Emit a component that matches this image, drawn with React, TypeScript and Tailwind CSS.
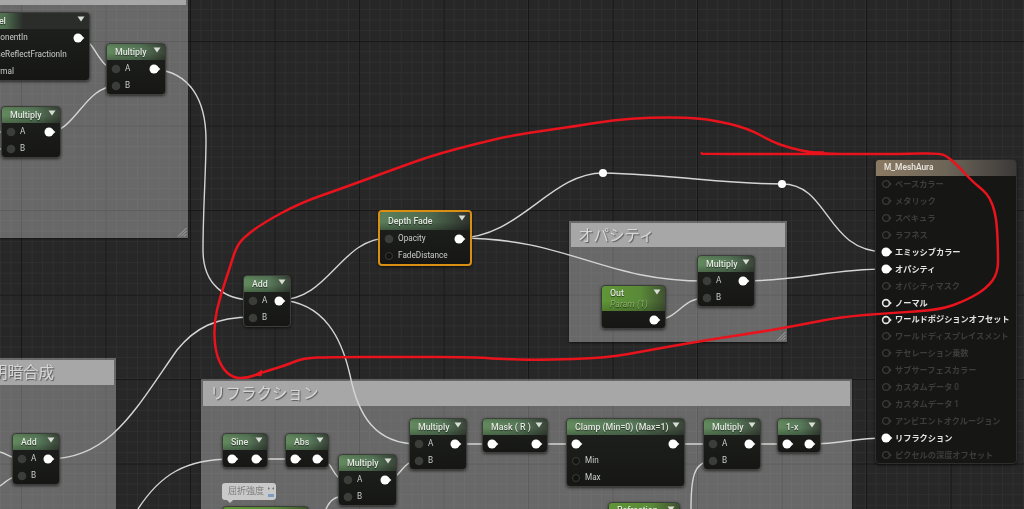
import React from "react";

type PinKind = "in" | "empty" | "out" | "ring" | "dim";
type Row = { l?: PinKind; t?: string; r?: PinKind };

const AB: Row[] = [
  { l: "in", t: "A", r: "out" },
  { l: "in", t: "B" },
];
const THROUGH: Row[] = [{ l: "out", r: "out" }];

const GREEN = "bg-[linear-gradient(180deg,rgba(0,0,0,0.12),transparent_25%,transparent_55%,rgba(0,0,0,0.25)),linear-gradient(90deg,#62895d,#58795a_55%,#3a4538)]";
const PARAM = "bg-[linear-gradient(180deg,transparent_60%,rgba(0,0,0,0.18)),linear-gradient(90deg,#5f9636,#5a8a38_60%,#3f5230)]";

const FONT = "font-['Roboto','Noto_Sans_CJK_JP',sans-serif]";

// Little socket shapes, all 12 wide so the labels line up
const Pin = ({ kind }: { kind?: PinKind }) => {
  if (!kind) return <span className="w-[12px]" />;
  return (
    <svg viewBox="0 0 12 10" className="w-[12px] h-[10px] shrink-0">
      {kind === "out" && (
        <>
          <path d="M8 2 L11.4 5 L8 8 Z" fill="#f4f4f4" />
          <circle cx="5" cy="5" r="4.5" fill="#ffffff" />
        </>
      )}
      {kind === "in" && <circle cx="5" cy="5" r="4.3" fill="#3b3d39" />}
      {kind === "empty" && <circle cx="5" cy="5" r="3.5" fill="#131412" stroke="#393b37" strokeWidth="1" />}
      {kind === "ring" && (
        <>
          <path d="M8 2.4 L10.8 5 L8 7.6 Z" fill="#e6e6e6" />
          <circle cx="5" cy="5" r="3.4" fill="#1a1b19" stroke="#e6e6e6" strokeWidth="1.6" />
        </>
      )}
      {kind === "dim" && (
        <>
          <path d="M8 2.4 L10.8 5 L8 7.6 Z" fill="#3a3b39" />
          <circle cx="5" cy="5" r="3.4" fill="#161715" stroke="#3a3b39" strokeWidth="1.3" />
        </>
      )}
    </svg>
  );
};

const Arrow = () => (
  <svg viewBox="0 0 8 6" className="absolute right-[4px] top-[3px] w-[8px] h-[6px]">
    <path d="M0.5 0.5 H7.5 L4 5.5 Z" fill="#d9ddd6" />
  </svg>
);

const Node = ({
  pos,
  title,
  rows,
  sub,
  head = GREEN,
  headH = "h-[16px] pt-[2px]",
  frame = "border border-[#3c3e3a]",
}: {
  pos: string;
  title: string;
  rows: Row[];
  sub?: string;
  head?: string;
  headH?: string;
  frame?: string;
}) => (
  <div
    className={`absolute ${pos} ${frame} rounded-[4px] overflow-hidden bg-[linear-gradient(180deg,#1f211e,#161715)] shadow-[0_1px_3px_rgba(0,0,0,0.6)] ${FONT}`}
  >
    <div className={`relative ${headH} ${head} pl-[8px] text-[8.8px] leading-[12px] font-medium text-[#e3e8e0] whitespace-nowrap [text-shadow:0_1px_1px_rgba(0,0,0,0.6)]`}>
      {title}
      {sub && <div className="italic font-normal text-[#8fb26c] text-[8.8px] leading-[11px]">{sub}</div>}
      <Arrow />
    </div>
    {rows.map((row, i) => (
      <div key={i} className="flex items-center h-[17px] pl-[4px] pr-[4px] text-[8.2px] text-[#c9ccc7] whitespace-nowrap">
        <Pin kind={row.l} />
        <span className="ml-[2px] flex-1">{row.t}</span>
        <Pin kind={row.r} />
      </div>
    ))}
  </div>
);

const Grip = () => (
  <svg viewBox="0 0 10 10" className="absolute right-[1px] bottom-[1px] w-[10px] h-[10px]">
    <path d="M9.5 1 L1 9.5 M9.5 4 L4 9.5 M9.5 7 L7 9.5" stroke="#a8a8a8" strokeWidth="1" />
  </svg>
);

const Comment = ({ pos, title, band }: { pos: string; title?: string; band: string }) => (
  <div className={`absolute ${pos} bg-white/30 p-[2px] shadow-[0_1px_2px_rgba(0,0,0,0.5)] ${FONT}`}>
    <div className={`${band} bg-[#a7a7a7] flex items-center pt-[3px] text-[15.5px] text-[#d6d6d6] [text-shadow:1px_1px_1px_#5a5a5a] whitespace-nowrap`}>
      {title}
    </div>
    <Grip />
  </div>
);

const materialPins: { t: string; on?: PinKind }[] = [
  { t: "ベースカラー" },
  { t: "メタリック" },
  { t: "スペキュラ" },
  { t: "ラフネス" },
  { t: "エミッシブカラー", on: "out" },
  { t: "オパシティ", on: "out" },
  { t: "オパシティマスク" },
  { t: "ノーマル", on: "ring" },
  { t: "ワールドポジションオフセット", on: "ring" },
  { t: "ワールドディスプレイスメント" },
  { t: "テセレーション乗数" },
  { t: "サブサーフェスカラー" },
  { t: "カスタムデータ 0" },
  { t: "カスタムデータ 1" },
  { t: "アンビエントオクルージョン" },
  { t: "リフラクション", on: "out" },
  { t: "ピクセルの深度オフセット" },
];

const wires = [
  "M79 38 C95 38 98 69 116 69",
  "M49 132 C75 132 85 86 116 86",
  "M154 69 C190 72 206 100 206 140 C206 170 203 210 203 250 C203 285 225 300 253 300",
  "M279 300 C330 300 340 238 389 238",
  "M48 459 C110 459 135 410 177 350 C195 328 215 317 253 317",
  "M279 300 C325 302 342 340 350 375 C358 415 375 444 418 444",
  "M458 238 C520 238 550 173 603 173",
  "M603 173 C680 175 720 184 782 184",
  "M782 184 C830 184 825 252 886 252",
  "M458 238 C570 238 600 281 706 281",
  "M744 281 C800 281 830 269 886 269",
  "M654 320 C680 320 680 298 706 298",
  "M0 452 C8 454 12 459 21 459",
  "M0 486 C8 480 12 476 21 476",
  "M0 132 H11",
  "M0 149 H11",
  "M138 509 C160 475 185 459 232 459",
  "M255 459 H295",
  "M318 459 C335 459 330 480 347 480",
  "M326 509 C330 500 335 496 347 496",
  "M385 480 C402 480 400 461 418 461",
  "M456 444 H492",
  "M537 444 H575",
  "M673 444 H712",
  "M750 444 H786",
  "M810 444 C845 444 850 438 886 438",
  "M691 509 C691 480 693 461 712 461",
];

// hand drawn red pen line, traced point by point
const penPoints = [
  [703, 154], [701, 153], [703, 154], [760, 154], [840, 154], [900, 154], [940, 153], [948, 157], [957, 165],
  [973, 182], [983, 190], [990, 198], [995, 212], [997, 227], [998, 250], [998, 273], [987, 288], [967, 300],
  [940, 310], [890, 313], [840, 317], [800, 325], [760, 332], [707, 340], [650, 350], [607, 358], [540, 360],
  [500, 359], [473, 357], [400, 357], [333, 357], [303, 358], [287, 365], [260, 373], [248, 378], [233, 378],
  [222, 368], [215, 350], [214, 323], [220, 297], [230, 267], [236, 248], [243, 238], [263, 223], [300, 203],
  [343, 188], [400, 167], [440, 153], [500, 138], [527, 133], [577, 126], [613, 120], [650, 117.5], [687, 117.5],
  [713, 120], [747, 128], [773, 142], [790, 148], [813, 153], [840, 154],
];

const smooth = (pts: number[][]) => {
  let d = `M${pts[0][0]} ${pts[0][1]}`;
  for (let i = 1; i < pts.length - 1; i++) {
    const mx = (pts[i][0] + pts[i + 1][0]) / 2;
    const my = (pts[i][1] + pts[i + 1][1]) / 2;
    d += ` Q${pts[i][0]} ${pts[i][1]} ${mx} ${my}`;
  }
  const last = pts[pts.length - 1];
  return `${d} L${last[0]} ${last[1]}`;
};

export default function App() {
  return (
    <div className="relative w-[1024px] h-[509px] overflow-hidden blur-[0.35px] bg-[#272727] bg-[image:linear-gradient(#171717_1px,transparent_1px),linear-gradient(90deg,#171717_1px,transparent_1px),linear-gradient(#2f2f2f_1px,transparent_1px),linear-gradient(90deg,#2f2f2f_1px,transparent_1px)] bg-[size:84.5px_84.5px,84.5px_84.5px,10.56px_10.56px,10.56px_10.56px] bg-[position:0_41px,21px_0,0_9px,0_0]">
      {/* comment boxes sit under everything */}
      <Comment pos="left-[-100px] top-[-21px] w-[288px] h-[259px]" band="h-[24px]" />
      <Comment pos="left-[569px] top-[221px] w-[218px] h-[121px]" title="オパシティ" band="h-[24px] pl-[7px]" />
      <Comment pos="left-[-100px] top-[358px] w-[216px] h-[200px]" title="明暗合成" band="h-[25px] pl-[90px]" />
      <Comment pos="left-[201px] top-[379px] w-[651px] h-[180px]" title="リフラクション" band="h-[25px] pl-[7px]" />

      {/* wires */}
      <svg viewBox="0 0 1024 509" className="absolute left-0 top-0 w-[1024px] h-[509px]" fill="none">
        {wires.map((d) => (
          <path key={d} d={d} stroke="#d4d4d4" strokeWidth="1.4" />
        ))}
        <circle cx="603" cy="173" r="4" fill="#ffffff" />
        <circle cx="782" cy="184" r="4" fill="#ffffff" />
      </svg>

      {/* nodes */}
      <Node
        pos="left-[-32px] top-[12px] w-[122px]"
        title="Fresnel"
        rows={[{ l: "empty", t: "ExponentIn", r: "out" }, { l: "empty", t: "BaseReflectFractionIn" }, { l: "empty", t: "Normal" }]}
        head="bg-[linear-gradient(90deg,#62895d,#4f6e50_30%,#2b2d2a_45%,#2b2d2a)]"
      />
      <Node pos="left-[106px] top-[43px] w-[60px]" title="Multiply" rows={AB} />
      <Node pos="left-[1px] top-[106px] w-[60px]" title="Multiply" rows={AB} />
      <Node pos="left-[243px] top-[275px] w-[48px]" title="Add" rows={AB} />
      <Node pos="left-[12px] top-[433px] w-[48px]" title="Add" rows={AB} />
      <Node
        pos="left-[378px] top-[210px] w-[94px]"
        title="Depth Fade"
        rows={[{ l: "in", t: "Opacity", r: "out" }, { l: "empty", t: "FadeDistance" }]}
        headH="h-[18px] pt-[3px]"
        frame="border-2 border-[#d98f12]"
        head="bg-[linear-gradient(180deg,transparent_55%,rgba(0,0,0,0.3)),linear-gradient(90deg,#5b7f5c,#4f6a50_55%,#2e322d)]"
      />
      <Node pos="left-[697px] top-[255px] w-[58px]" title="Multiply" rows={AB} />
      <Node pos="left-[601px] top-[285px] w-[65px]" title="Out" sub="Param (1)" rows={[{ r: "out" }]} head={PARAM} headH="h-[25px] pt-[1px]" />

      <Node pos="left-[222px] top-[433px] w-[46px]" title="Sine" rows={THROUGH} />
      <Node pos="left-[285px] top-[433px] w-[44px]" title="Abs" rows={THROUGH} />
      <Node pos="left-[338px] top-[454px] w-[59px]" title="Multiply" rows={AB} />
      <Node pos="left-[409px] top-[418px] w-[58px]" title="Multiply" rows={AB} />
      <Node pos="left-[482px] top-[418px] w-[66px]" title="Mask ( R )" rows={THROUGH} />
      <Node
        pos="left-[566px] top-[418px] w-[119px]"
        title="Clamp (Min=0) (Max=1)"
        rows={[{ l: "out", r: "out" }, { l: "empty", t: "Min" }, { l: "empty", t: "Max" }]}
      />
      <Node pos="left-[703px] top-[418px] w-[58px]" title="Multiply" rows={AB} />
      <Node pos="left-[777px] top-[418px] w-[44px]" title="1-x" rows={THROUGH} />
      <Node pos="left-[222px] top-[506px] w-[87px]" title="" rows={[]} head={PARAM} headH="h-[25px]" />
      <Node pos="left-[608px] top-[502px] w-[72px]" title="Refraction" rows={[]} head={PARAM} headH="h-[25px] pt-[1px]" />

      {/* little comment bubble above the parameter */}
      <div className={`absolute left-[222px] top-[483px] w-[54px] h-[17px] rounded-[3px] bg-[#c9c9c9] pl-[6px] text-[9px] leading-[17px] text-[#7c7c7c] ${FONT}`}>
        屈折強度
        <svg viewBox="0 0 8 12" className="absolute right-[1px] top-[3px] w-[8px] h-[12px]">
          <path d="M1 1 L3 2.5 L1 4 Z M7 1 L5 2.5 L7 4 Z" fill="#777" />
          <rect x="1" y="8" width="6" height="3" fill="#7a9cc0" />
        </svg>
        <div className="absolute left-[5px] bottom-[-3px] w-0 h-0 border-x-[3px] border-x-transparent border-t-[3px] border-t-[#c9c9c9]" />
      </div>

      {/* material result node */}
      <div className={`absolute left-[875px] top-[159px] w-[142px] rounded-[4px] overflow-hidden bg-[#161715] border border-[#2e2f2d] shadow-[0_1px_3px_rgba(0,0,0,0.6)] ${FONT}`}>
        <div className="h-[16px] pl-[8px] text-[8.4px] leading-[15px] font-semibold text-[#e6e2da] bg-[linear-gradient(90deg,#8b7a63,#6d6558_50%,#3b3a38)]">
          M_MeshAura
        </div>
        {materialPins.map((p) => (
          <div
            key={p.t}
            className={`flex items-center h-[16.9px] pl-[5px] text-[8.2px] font-semibold whitespace-nowrap ${p.on ? "text-[#e4e4e4]" : "text-[#3d3e3c]"}`}
          >
            <Pin kind={p.on ?? "dim"} />
            <span className="ml-[2px]">{p.t}</span>
          </div>
        ))}
      </div>

      {/* red pen scribble on top */}
      <svg viewBox="0 0 1024 509" className="absolute left-0 top-0 w-[1024px] h-[509px]" fill="none">
        <path d={smooth(penPoints)} stroke="#e8131c" strokeWidth="2.5" strokeLinecap="round" strokeLinejoin="round" />
        <path d="M255 375 L262 370 L261 376 Z" fill="#e8131c" stroke="#e8131c" strokeWidth="1" />
        <path d="M808 153 L824 153" stroke="#e8131c" strokeWidth="3.5" />
      </svg>
    </div>
  );
}
